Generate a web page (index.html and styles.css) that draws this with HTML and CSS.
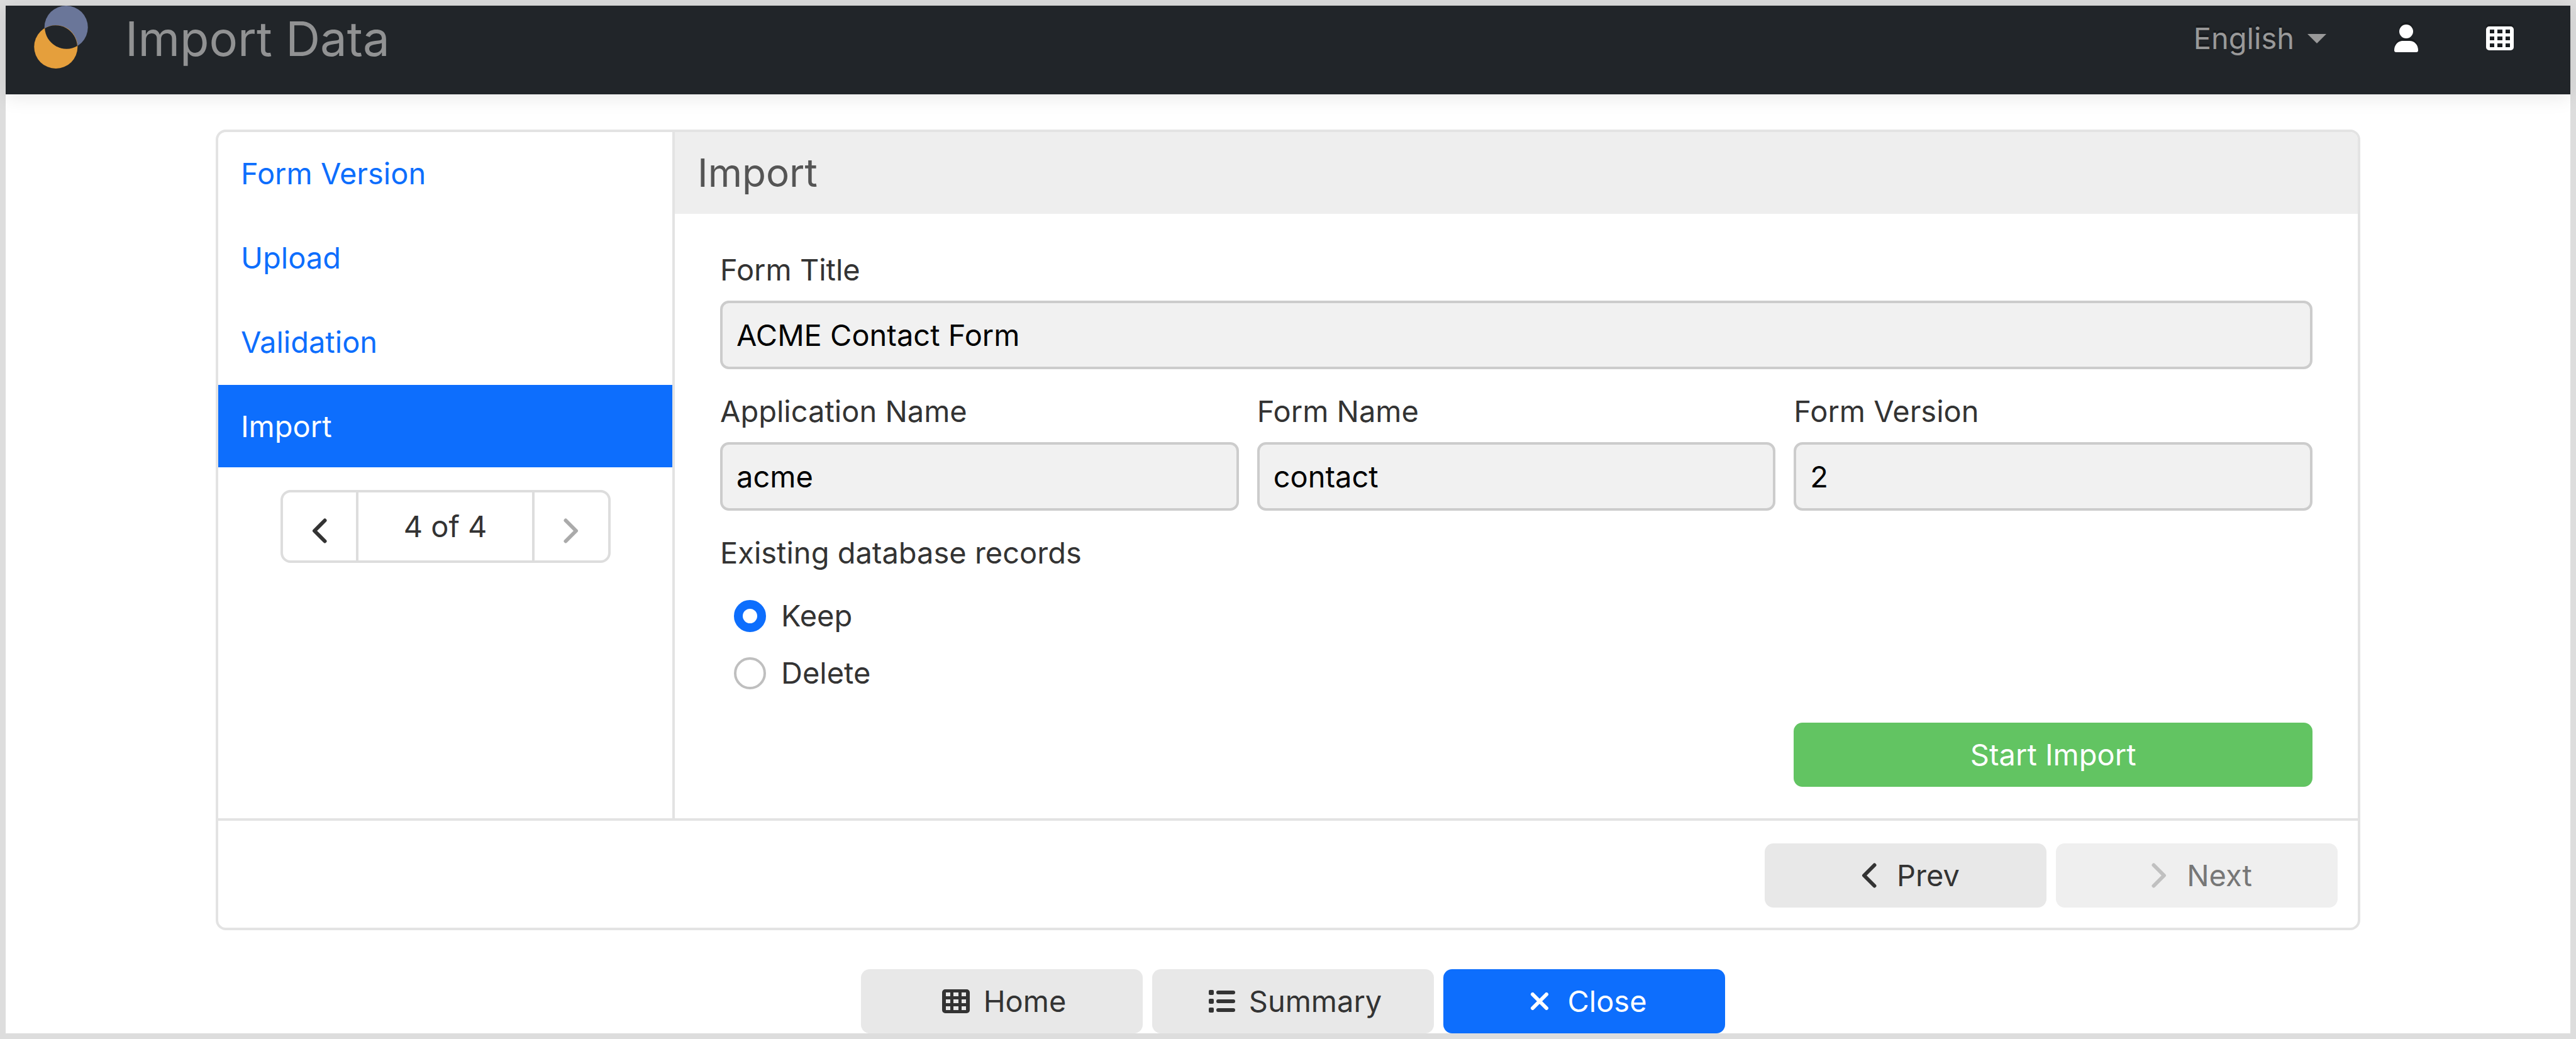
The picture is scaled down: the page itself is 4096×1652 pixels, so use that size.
FILE: index.html
```html
<!DOCTYPE html>
<html lang="en">
<head>
<meta charset="utf-8">
<title>Import Data</title>
<link rel="stylesheet" href="styles.css">
</head>
<body>
<svg class="sprite" aria-hidden="true">
  <symbol id="grid" viewBox="0 0 44 38">
    <path fill-rule="evenodd" d="M5 0H39a5 5 0 0 1 5 5V33a5 5 0 0 1-5 5H5a5 5 0 0 1-5-5V5a5 5 0 0 1 5-5ZM6 5v6h7V5ZM18 5v6h8V5ZM31 5v6h7V5ZM6 16v6h7V16ZM18 16v6h8V16ZM31 16v6h7V16ZM6 27v6h7V27ZM18 27v6h8V27ZM31 27v6h7V27Z"/>
  </symbol>
  <symbol id="left" viewBox="0 0 24 40">
    <path d="M20.500 3.500 4 20 20.500 36.500" fill="none" stroke="currentColor" stroke-width="6" stroke-linecap="round" stroke-linejoin="round"/>
  </symbol>
  <symbol id="right" viewBox="0 0 24 40">
    <path d="M3.500 3.500 20 20 3.500 36.500" fill="none" stroke="currentColor" stroke-width="6" stroke-linecap="round" stroke-linejoin="round"/>
  </symbol>
</svg>
<div class="page">
  <header class="navbar">
    <a class="brand" href="#">
      <svg class="logo" viewBox="0 0 94 110" aria-hidden="true">
        <circle cx="56" cy="38" r="38" fill="#6a7699"/>
        <circle cx="38" cy="72" r="38" fill="#e59f3c"/>
        <path d="M18.600 39.500A38 38 0 0 1 75.500 70.500A38 38 0 0 1 18.600 39.500Z" fill="#212529"/>
      </svg>
      <span>Import Data</span>
    </a>
    <nav class="tools">
      <button class="language" type="button">English <span class="caret"></span></button>
      <a class="tool" href="#" aria-label="Account"><svg class="user" viewBox="0 0 38 44"><circle cx="19" cy="11" r="11"/><path d="M0 41C0 32 6 26 14 26H24C32 26 38 32 38 41Q38 44 35 44H3Q0 44 0 41Z"/></svg></a>
      <a class="tool" href="#" aria-label="Home"><svg class="grid-icon"><use href="#grid"/></svg></a>
    </nav>
  </header>
  <main class="container">
    <section class="wizard">
      <div class="wizard-main">
        <aside class="sidebar">
          <nav class="steps">
            <a href="#">Form Version</a>
            <a href="#">Upload</a>
            <a href="#">Validation</a>
            <a class="active" href="#">Import</a>
          </nav>
          <div class="pager">
            <button type="button" aria-label="Previous step"><svg class="chevron"><use href="#left"/></svg></button>
            <span>4 of 4</span>
            <button type="button" aria-label="Next step" disabled><svg class="chevron"><use href="#right"/></svg></button>
          </div>
        </aside>
        <form class="content">
          <h1>Import</h1>
          <div class="fields">
            <div class="field wide"><label for="title">Form Title</label><input id="title" type="text" value="ACME Contact Form" readonly></div>
            <div class="field"><label for="app">Application Name</label><input id="app" type="text" value="acme" readonly></div>
            <div class="field"><label for="name">Form Name</label><input id="name" type="text" value="contact" readonly></div>
            <div class="field"><label for="version">Form Version</label><input id="version" type="text" value="2" readonly></div>
            <fieldset class="wide">
              <legend>Existing database records</legend>
              <label class="choice"><input type="radio" name="records" checked>Keep</label>
              <label class="choice"><input type="radio" name="records">Delete</label>
            </fieldset>
            <button class="btn start" type="button">Start Import</button>
          </div>
        </form>
      </div>
      <div class="wizard-foot">
        <button class="btn" type="button"><svg class="chevron"><use href="#left"/></svg>Prev</button>
        <button class="btn" type="button" disabled><svg class="chevron"><use href="#right"/></svg>Next</button>
      </div>
    </section>
    <div class="actions">
      <button class="btn" type="button"><svg class="grid-icon"><use href="#grid"/></svg>Home</button>
      <button class="btn" type="button"><svg class="list-icon" viewBox="0 0 42 36"><rect width="8" height="8" rx="2"/><rect y="14" width="8" height="8" rx="2"/><rect y="28" width="8" height="8" rx="2"/><rect x="12" y="1" width="30" height="6" rx="3"/><rect x="12" y="15" width="30" height="6" rx="3"/><rect x="12" y="29" width="30" height="6" rx="3"/></svg>Summary</button>
      <button class="btn primary" type="button"><svg class="close-icon" viewBox="-8 0 44 28"><path d="M3 3 25 25M25 3 3 25"/></svg>Close</button>
    </div>
  </main>
</div>
</body>
</html>
```
FILE: styles.css
```css
* { box-sizing: border-box; }

body {
  margin: 0;
  background: #fff;
  color: #333;
  font-family: Inter, "Liberation Sans", sans-serif;
  font-size: 47px;
  line-height: 70px;
}

a { color: #0d6efd; text-decoration: none; }
button, input { font: inherit; color: inherit; margin: 0; }
svg { fill: currentColor; flex: none; }
.sprite { position: absolute; width: 0; height: 0; }

.page { border: 9px solid #ddd; }

.navbar {
  display: flex;
  justify-content: space-between;
  align-items: flex-start;
  height: 141px;
  padding: 0 90px 0 45px;
  background: #212529;
  box-shadow: 0 3px 30px rgba(0, 0, 0, .1);
}
.brand { display: flex; gap: 59px; color: #919293; font-size: 76px; line-height: 104px; }
.logo { width: 86px; height: 100px; }
.tools { display: flex; align-items: center; height: 104px; color: #fff; text-shadow: 0 -4px 0 rgba(0, 0, 0, .25); }
.language { display: flex; align-items: center; gap: 21px; padding: 0; border: 0; background: none; color: #999; text-shadow: inherit; }
.caret { border: 15px solid transparent; border-top-color: #999; border-bottom: 0; }
.tool { display: flex; margin-left: 108px; color: #fff; filter: drop-shadow(0 -4px 0 rgba(0, 0, 0, .25)); }
.user { width: 38px; height: 44px; }
.grid-icon { width: 44px; height: 38px; }

.container { padding: 56px 334px 0; }
.wizard { border: 4px solid #e3e3e3; border-radius: 16px; overflow: hidden; }
.wizard-main { display: grid; grid-template-columns: 726px 1fr; }

.sidebar { border-right: 4px solid #e3e3e3; }
.steps { display: grid; gap: 3px; }
.steps a { padding: 31px 36px 30px; }
.steps .active { background: #0d6efd; color: #fff; }
.pager { display: flex; width: 525px; height: 116px; margin: 36px auto 0; border: 4px solid #ddd; border-radius: 16px; }
.pager > * { flex: 1; display: flex; align-items: center; justify-content: center; padding: 0; border: 0; background: none; }
.pager span { flex: none; width: 284px; border: solid #ddd; border-width: 0 4px; }
.pager button { padding-top: 14px; }
.pager button:disabled { color: #aaa; }
.chevron { width: 24px; height: 40px; }

h1 { margin: 0; padding: 30px 36px; background: #eee; color: #555; font-size: 62px; font-weight: 400; line-height: 70px; }
.fields { display: grid; grid-template-columns: repeat(3, 1fr); column-gap: 29px; row-gap: 32px; padding: 54px 72px 50px; }
.wide { grid-column: 1 / -1; }
.field { display: grid; gap: 14px; }
.field input {
  width: 100%;
  height: 109px;
  padding: 0 22px;
  border: 4px solid #ccc;
  border-radius: 14px;
  background: #f1f1f1;
  color: #000;
}
fieldset { margin: 0; padding: 0; border: 0; }
legend { padding: 0; margin-bottom: 30px; }
.choice { display: flex; align-items: center; gap: 24px; padding-left: 22px; }
.choice + .choice { margin-top: 21px; }
.choice input { appearance: none; width: 51px; height: 51px; border: 4px solid #bfbfbf; border-radius: 50%; background: #fff; }
.choice input:checked { border: 14px solid #0d6efd; }

.btn {
  display: flex;
  align-items: center;
  justify-content: center;
  gap: 22px;
  width: 448px;
  height: 102px;
  padding: 0;
  border: 0;
  border-radius: 14px;
  background: #e8e8e8;
}
.start { grid-column: 3; width: 100%; margin-top: 12px; background: #62c462; color: #fff; }
.wizard-foot { display: flex; justify-content: flex-end; gap: 15px; padding: 36px 32px; border-top: 4px solid #e3e3e3; padding-bottom: 32px; }
.wizard-foot .btn { gap: 32px; padding-left: 16px; }
.wizard-foot .btn:disabled { background: #efefef; color: #777; }
.btn:disabled .chevron { color: #c0c0c0; }

.actions { display: flex; justify-content: center; margin-top: 62px; }
.actions .btn { margin-left: 15px; padding-left: 8px; }
.btn.primary { background: #0d6efd; color: #fff; }
.list-icon { width: 42px; height: 36px; }
.close-icon { width: 44px; height: 28px; fill: none; stroke: currentColor; stroke-width: 6; stroke-linecap: round; }
```
